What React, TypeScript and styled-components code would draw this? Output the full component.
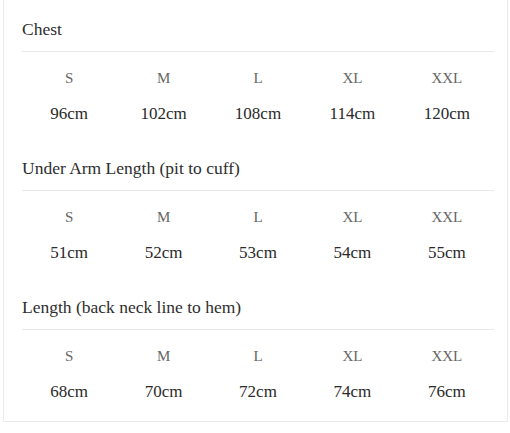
import React from "react";
import styled, { createGlobalStyle } from "styled-components";

const GlobalStyle = createGlobalStyle`
  html, body {
    margin: 0;
    padding: 0;
    background: #ffffff;
  }
  body {
    font-family: "Liberation Serif", "DejaVu Serif", serif;
    -webkit-font-smoothing: antialiased;
  }
`;

const Card = styled.div`
  box-sizing: border-box;
  width: 505px;
  margin-left: 3px;
  padding: 17px 13px 17px 18px;
  background: #fff;
  border: 1px solid #ebebe8;
  border-top: none;
`;

const Section = styled.section`
  & + & {
    margin-top: 30px;
  }
`;

const Heading = styled.h3`
  margin: 0;
  font-size: 17.5px;
  line-height: 24px;
  font-weight: 400;
  color: #2e2e2e;
  padding-bottom: 10px;
  border-bottom: 1px solid #e8e8e6;
`;

const Row = styled.div<{ $first?: boolean }>`
  display: grid;
  grid-template-columns: repeat(5, 1fr);
  margin-top: ${(p) => (p.$first ? "14px" : "12px")};
`;

const Cell = styled.div<{ $label?: boolean }>`
  text-align: center;
  line-height: 24px;
  font-size: ${(p) => (p.$label ? "15px" : "17px")};
  color: ${(p) => (p.$label ? "#666" : "#2a2a2a")};
`;

const sizes = ["S", "M", "L", "XL", "XXL"];

const data = [
  { title: "Chest", values: ["96cm", "102cm", "108cm", "114cm", "120cm"] },
  {
    title: "Under Arm Length (pit to cuff)",
    values: ["51cm", "52cm", "53cm", "54cm", "55cm"],
  },
  {
    title: "Length (back neck line to hem)",
    values: ["68cm", "70cm", "72cm", "74cm", "76cm"],
  },
];

export default function App() {
  return (
    <>
      <GlobalStyle />
      <Card>
        {data.map((section) => (
          <Section key={section.title}>
            <Heading>{section.title}</Heading>
            <Row $first>
              {sizes.map((s) => (
                <Cell $label key={s}>
                  {s}
                </Cell>
              ))}
            </Row>
            <Row>
              {section.values.map((v) => (
                <Cell key={v}>{v}</Cell>
              ))}
            </Row>
          </Section>
        ))}
      </Card>
    </>
  );
}
